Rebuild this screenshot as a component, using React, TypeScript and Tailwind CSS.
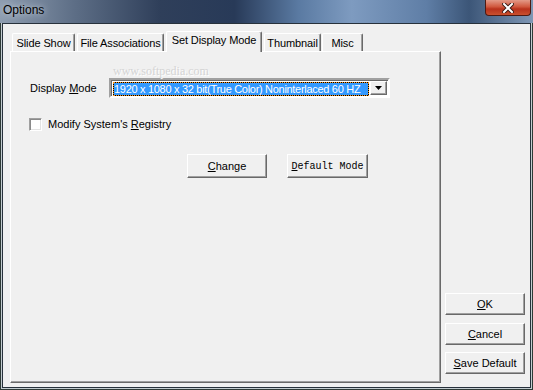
import React from 'react'

const raised =
  'border border-t-white border-l-white border-r-[#696969] border-b-[#696969] shadow-[inset_-1px_-1px_0_#a0a0a0] bg-[#f0f0f0]'

function Tab({ label, width, selected }: { label: string; width: string; selected?: boolean }) {
  return (
    <div
      className={`${width} ${
        selected ? 'h-[21px] -mb-px relative z-10 pb-[3px]' : 'h-[18px] pt-px'
      } shrink-0 flex items-center justify-center border-t border-l border-r border-t-white border-l-white border-r-[#696969] shadow-[inset_-1px_0_0_#a0a0a0] rounded-t-[2px] bg-[#f0f0f0] text-black tracking-[-0.1px]`}
    >
      {label}
    </div>
  )
}

function SideButton({ children, className = '' }: { children: React.ReactNode; className?: string }) {
  return <div className={`${raised} h-[22px] flex items-center justify-center ${className}`}>{children}</div>
}

export default function App() {
  return (
    <div
      className="w-[533px] h-[390px] flex flex-col overflow-hidden text-[11px] text-black"
      style={{ fontFamily: '"Liberation Sans", Arial, sans-serif' }}
    >
      {/* title bar */}
      <div className="h-[23px] shrink-0 flex items-start justify-between bg-[linear-gradient(90deg,#8e9db0_0%,#5d6e86_14%,#2f3f5a_30%,#283a58_44%,#5a7aa2_56%,#7e9bc0_66%,#5f7ea6_80%,#3c5678_88%,#7f97b5_100%)]">
        <span className="pl-[3px] pt-[3px] text-[12px] leading-[14px] text-black [text-shadow:0_0_6px_#dfe6ee]">
          Options
        </span>
        <div className="mr-[2px] w-[46px] h-[16px] flex items-center justify-center rounded-b-[4px] border border-t-0 border-[#4e1a12] bg-[linear-gradient(180deg,#e39a88_0%,#d0583e_45%,#b8321c_60%,#c9502e_100%)]">
          <svg width="12" height="10" viewBox="0 0 12 10">
            <path d="M2 1 L10 9 M10 1 L2 9" stroke="#3a1a14" strokeWidth="4" strokeLinecap="square" />
            <path d="M2 1 L10 9 M10 1 L2 9" stroke="#ffffff" strokeWidth="2" strokeLinecap="square" />
          </svg>
        </div>
      </div>

      {/* frame */}
      <div className="flex-1 flex border-x border-b border-[#2e3a36] bg-[#c3ccd0] px-px pb-px">
        <div className="flex-1 flex border border-[#27313b] bg-[#f0f0f0] pl-[7px] pt-[7px] pb-[4px] pr-[5px]">
          {/* tab control */}
          <div className="w-[431px] flex flex-col">
            <div className="h-[20px] flex items-end pl-[2px]">
              <Tab label="Slide Show" width="w-[63px]" />
              <div className="w-[2px]" />
              <Tab label="File Associations" width="w-[87px]" />
              <div className="w-[2px]" />
              <Tab label="Set Display Mode" width="w-[96px]" selected />
              <div className="w-[2px]" />
              <Tab label="Thumbnail" width="w-[57px]" />
              <div className="w-px" />
              <Tab label="Misc" width="w-[41px]" />
            </div>

            <div className="relative flex-1 flex flex-col border border-t-white border-l-white border-r-[#696969] border-b-[#696969] shadow-[inset_-1px_-1px_0_#a0a0a0] pt-[26px] pl-[18px]">
              <span
                className="absolute left-[102px] top-[13px] text-[12px] leading-[13px] text-[#d4d4d4] [text-shadow:1px_1px_0_#ffffff]"
                style={{ fontFamily: '"Liberation Serif", serif' }}
              >
                www.softpedia.com
              </span>

              {/* display mode row */}
              <div className="flex items-center h-[20px]">
                <span className="ml-px w-[79px]">
                  Display <u>M</u>ode
                </span>
                <div className="w-[281px] h-[20px] flex border-2 border-t-[#a0a0a0] border-l-[#a0a0a0] border-r-white border-b-white shadow-[inset_1px_1px_0_#696969] bg-white">
                  <div className="flex-1 p-px pl-[2px] pt-[2px]">
                    <div className="h-[14px] border border-dotted border-[#f7941d] bg-black">
                      <div className="h-full bg-[#3399ff] text-white leading-[12px] whitespace-nowrap overflow-hidden tracking-[-0.3px]">
                        1920 x 1080 x 32 bit(True Color) Noninterlaced 60 HZ
                      </div>
                    </div>
                  </div>
                  <div className="py-px pr-px">
                    <div className={`${raised} w-[17px] h-full flex items-center justify-center`}>
                      <svg width="7" height="4" viewBox="0 0 7 4">
                        <path d="M0 0 H7 L3.5 4 Z" fill="#000" />
                      </svg>
                    </div>
                  </div>
                </div>
              </div>

              {/* checkbox row */}
              <div className="mt-[20px] flex items-center h-[13px]">
                <div className="w-[13px] h-[13px] border border-t-[#a0a0a0] border-l-[#a0a0a0] border-r-white border-b-white bg-white shadow-[inset_1px_1px_0_#8a8a8a,inset_-1px_-1px_0_#e3e3e3]" />
                <span className="ml-[6px]">
                  Modify System's <u>R</u>egistry
                </span>
              </div>

              {/* action buttons */}
              <div className="mt-[23px] flex">
                <div className={`${raised} ml-[158px] w-[80px] h-[24px] flex items-center justify-center`}>
                  <span>
                    <u>C</u>hange
                  </span>
                </div>
                <div
                  className={`${raised} ml-[20px] w-[81px] h-[24px] flex items-center justify-center text-[10px]`}
                  style={{ fontFamily: '"Liberation Mono", "DejaVu Sans Mono", monospace' }}
                >
                  <span>
                    <u>D</u>efault Mode
                  </span>
                </div>
              </div>
            </div>
          </div>

          {/* dialog buttons */}
          <div className="ml-[4px] w-[80px] flex flex-col justify-end pb-[9px]">
            <SideButton>
              <span>
                <u>O</u>K
              </span>
            </SideButton>
            <SideButton className="mt-[8px]">
              <span>
                <u>C</u>ancel
              </span>
            </SideButton>
            <SideButton className="mt-[7px]">
              <span>
                <u>S</u>ave Default
              </span>
            </SideButton>
          </div>
        </div>
      </div>
    </div>
  )
}
